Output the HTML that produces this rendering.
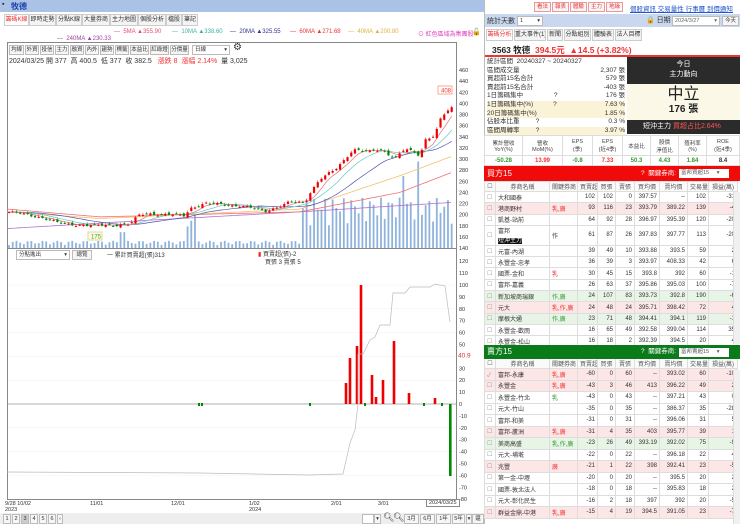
<!DOCTYPE html>
<html><head><meta charset="utf-8">
<style>
*{margin:0;padding:0;box-sizing:border-box}
body{width:740px;height:524px;overflow:hidden;background:#fff;font-family:"Liberation Sans","Noto Sans CJK TC",sans-serif;font-size:7px;color:#333;position:relative}
.a{position:absolute;white-space:nowrap}
.tab{position:absolute;top:14px;height:12px;border:1px solid #ccc;background:#f4f4f4;font-size:6px;line-height:10px;text-align:center;overflow:hidden;white-space:nowrap}
.btn{position:absolute;border:1px solid #bbb;background:#f6f6f6;font-size:5.5px;line-height:8px;height:10px;text-align:center;overflow:hidden;white-space:nowrap}
table{border-collapse:collapse;position:absolute;left:484px;font-size:6px;table-layout:fixed}
td{border:1px solid #ddd;padding:0 2px;overflow:hidden;white-space:nowrap;text-align:right}
td.l{text-align:left}
.pk td{background:#fde6e6}.gn td{background:#e8f5e6}
.r{color:#e33}.g{color:#393}
</style></head><body>
<div class="a" style="left:0;top:0;width:484px;height:12px;background:#a9c2e6"></div>
<div class="a" style="left:2px;top:1px;font-size:7px;color:#223">▪</div>
<div class="a" style="left:11px;top:1px;font-size:8px;color:#1a3fa8;font-weight:bold">牧德</div>
<div class="tab" style="left:4px;width:25px;color:#e33;background:#fff">籌碼K線</div>
<div class="tab" style="left:29px;width:27px">即時走勢</div>
<div class="tab" style="left:56px;width:26px">分點K線</div>
<div class="tab" style="left:82px;width:28px">大量券商</div>
<div class="tab" style="left:110px;width:28px">主力地圖</div>
<div class="tab" style="left:138px;width:28px">個股分析</div>
<div class="tab" style="left:166px;width:16px">檔股</div>
<div class="tab" style="left:182px;width:16px">筆記</div>
<div class="a" style="top:29px;left:114px;font-size:6px;color:#e05070">— &nbsp;5MA ▲355.90</div>
<div class="a" style="top:29px;left:172px;font-size:6px;color:#40b0a0">— &nbsp;10MA ▲338.60</div>
<div class="a" style="top:29px;left:230px;font-size:6px;color:#303090">— &nbsp;20MA ▲325.55</div>
<div class="a" style="top:29px;left:290px;font-size:6px;color:#e33">— &nbsp;60MA ▲271.68</div>
<div class="a" style="top:29px;left:348px;font-size:6px;color:#e0b040">— &nbsp;40MA ▲200.80</div>
<div class="a" style="top:29px;left:418px;font-size:6px;color:#e040c0">⊙ 紅色區域為集團股</div>
<div class="a" style="top:28px;left:472px;font-size:7px;color:#000">🔓</div>
<div class="a" style="top:36px;left:57px;font-size:6px;color:#a040a0">— &nbsp;240MA ▲230.33</div>
<div class="a" style="left:7px;top:42px;width:450px;height:458px;border:1px solid #888"></div>
<div class="btn" style="left:9px;top:45px;width:15px">均線</div><div class="btn" style="left:25px;top:45px;width:14px">外資</div><div class="btn" style="left:40px;top:45px;width:14px">投信</div><div class="btn" style="left:55px;top:45px;width:14px">主力</div><div class="btn" style="left:70px;top:45px;width:14px">融資</div><div class="btn" style="left:85px;top:45px;width:14px">內外</div><div class="btn" style="left:100px;top:45px;width:14px">趨勢</div><div class="btn" style="left:115px;top:45px;width:14px">標籤</div><div class="btn" style="left:130px;top:45px;width:19px">本益比</div><div class="btn" style="left:150px;top:45px;width:19px">紅綠燈</div><div class="btn" style="left:170px;top:45px;width:19px">分價量</div>
<div class="btn" style="left:192px;top:45px;width:38px;background:#fff;text-align:left;padding-left:2px">日線 <span style="position:absolute;right:2px">▾</span></div>
<div class="a" style="left:233px;top:42px;font-size:10px">⚙</div>
<div class="a" style="left:9px;top:56px;font-size:7px;color:#333">2024/03/25 開 377 &nbsp;高 400.5 &nbsp;低 377 &nbsp;收 382.5 &nbsp; <span class="r">漲跌 8 &nbsp;漲幅 2.14%</span> &nbsp;量 3,025</div>
<svg id="ch" class="a" style="left:0;top:0" width="484" height="524"></svg>
<div class="btn" style="left:16px;top:250px;width:54px;background:#fff;text-align:left;padding-left:2px">分點進出 <span style="position:absolute;right:2px">▾</span></div>
<div class="btn" style="left:72px;top:250px;width:20px">總覽</div>
<div class="a" style="left:107px;top:250px;font-size:6px">一 累計買賣超(張)313</div>
<div class="a" style="left:258px;top:249px;font-size:6px"><span style="color:#e22">▮</span> 買賣超(張)-2</div>
<div class="a" style="left:265px;top:257px;font-size:6px">買張 3 賣張 5</div>
<div class="a" style="left:5px;top:501px;font-size:5.5px;line-height:6px">9/28 10/02<br>2023</div>
<div class="a" style="left:90px;top:501px;font-size:5.5px">11/01</div>
<div class="a" style="left:171px;top:501px;font-size:5.5px">12/01</div>
<div class="a" style="left:249px;top:501px;font-size:5.5px;line-height:6px">1/02<br>2024</div>
<div class="a" style="left:331px;top:501px;font-size:5.5px">2/01</div>
<div class="a" style="left:378px;top:501px;font-size:5.5px">3/01</div>
<div class="a" style="left:426px;top:499px;font-size:5.5px;border:1px solid #888;padding:0 2px;background:#fff">2024/03/25</div>
<div class="a" style="left:0;top:513px;width:484px;height:11px;background:#eee"></div>
<div class="btn" style="left:3px;top:514px;width:8px">1</div><div class="btn" style="left:12px;top:514px;width:8px">2</div><div class="btn" style="left:21px;top:514px;width:8px;background:#ccc">3</div><div class="btn" style="left:30px;top:514px;width:8px">4</div><div class="btn" style="left:39px;top:514px;width:8px">5</div><div class="btn" style="left:48px;top:514px;width:8px">6</div><div class="btn" style="left:57px;top:514px;width:6px">‹</div>
<div class="btn" style="left:362px;top:514px;width:12px;background:#fff"></div><div class="btn" style="left:374px;top:514px;width:7px">▾</div>
<div class="a" style="left:383px;top:512px;font-size:9px">🔍︎</div><div class="a" style="left:393px;top:512px;font-size:9px">🔍︎</div>
<div class="btn" style="left:404px;top:514px;width:15px">3月</div><div class="btn" style="left:420px;top:514px;width:15px">6月</div><div class="btn" style="left:436px;top:514px;width:15px">1年</div><div class="btn" style="left:452px;top:514px;width:13px">5年</div><div class="btn" style="left:466px;top:514px;width:6px">▾</div><div class="btn" style="left:472px;top:514px;width:12px">還</div>

<div class="a" style="left:484px;top:0;width:1px;height:524px;background:#bbb"></div>
<div class="btn" style="left:534px;top:2px;width:17px;color:#e33;border-color:#e99">看法</div>
<div class="btn" style="left:552px;top:2px;width:17px;color:#e33;border-color:#e99">報表</div>
<div class="btn" style="left:570px;top:2px;width:17px;color:#e33;border-color:#e99">體驗</div>
<div class="btn" style="left:588px;top:2px;width:17px;color:#e33;border-color:#e99">主力</div>
<div class="btn" style="left:606px;top:2px;width:17px;color:#e33;border-color:#e99">地緣</div>
<div class="a" style="left:630px;top:3px;font-size:6.5px;color:#2255cc;text-decoration:underline">個股資訊 交易量性 行事曆 到價通知</div>
<div class="a" style="left:485px;top:14px;width:255px;height:13px;background:#c9d8ee"></div>
<div class="a" style="left:487px;top:16px;font-size:7px">統計天數</div>
<div class="btn" style="left:517px;top:16px;width:26px;background:#fff;text-align:left;padding-left:2px">1<span style="position:absolute;right:2px">▾</span></div>
<div class="a" style="left:646px;top:15px;font-size:7px">🔒 日期</div>
<div class="btn" style="left:672px;top:16px;width:48px;background:#fff;color:#666;text-align:left;padding-left:2px">2024/3/27<span style="position:absolute;right:2px">▾</span></div>
<div class="btn" style="left:722px;top:16px;width:17px">今天</div>
<div class="tab" style="left:486px;top:29px;width:27px;color:#e33;background:#fff">籌碼分析</div>
<div class="tab" style="left:514px;top:29px;width:32px">重大事件(1)</div>
<div class="tab" style="left:547px;top:29px;width:16px">新聞</div>
<div class="tab" style="left:564px;top:29px;width:27px">分點組別</div>
<div class="tab" style="left:592px;top:29px;width:22px">體驗表</div>
<div class="tab" style="left:615px;top:29px;width:27px">法人目標</div>
<div class="a" style="left:492px;top:44px;font-size:8.5px;font-weight:bold;color:#222">3563 牧德 &nbsp;<span class="r">394.5元 &nbsp;▲14.5 (+3.82%)</span></div>
<div class="a" style="left:485px;top:55px;width:255px;height:1.5px;background:#e33"></div>
<div class="a" style="left:487px;top:58px;font-size:6.5px;line-height:8.6px;width:138px">
統計區間 &nbsp;20240327 ~ 20240327<br>
區間成交量<span style="float:right">2,307 張</span><br>
買超前15名合計<span style="float:right">579 張</span><br>
賣超前15名合計<span style="float:right">-403 張</span><br>
1日籌碼集中 &nbsp; &nbsp; &nbsp; &nbsp; &nbsp; &nbsp; &nbsp; &nbsp; ?<span style="float:right">176 張</span><br>
<span style="background:#fbf3d8;display:block">1日籌碼集中(%) &nbsp; &nbsp; &nbsp; &nbsp; &nbsp; ?<span style="float:right">7.63 %</span></span>
<span style="background:#fbf3d8;display:block">20日籌碼集中(%)<span style="float:right">1.85 %</span></span>
佔股本比重 &nbsp; &nbsp; &nbsp; &nbsp; ?<span style="float:right">0.3 %</span><br>
<span style="background:#fbf3d8;display:block">區間周轉率 &nbsp; &nbsp; &nbsp; &nbsp; ?<span style="float:right">3.97 %</span></span>
</div>
<div class="a" style="left:627px;top:57px;width:113px;height:27px;background:#2b2b2b;color:#fff;text-align:center;font-size:7px;line-height:10px;padding-top:3px">今日<br>主力動向</div>
<div class="a" style="left:627px;top:84px;width:113px;height:36px;background:#fbf8e8;text-align:center;color:#222">
<div style="font-size:16px;line-height:18px;margin-top:2px">中立</div><div style="font-size:10px;line-height:11px;font-weight:bold">176 張</div></div>
<div class="a" style="left:627px;top:120px;width:113px;height:14px;background:#2b2b2b;color:#fff;font-size:7px;line-height:14px;padding-left:16px">短沖主力 <span style="color:#f55">買超占比2.64%</span></div>
<table style="top:135px;width:256px;font-size:5.5px;text-align:center">
<tr style="height:20px;color:#444"><td style="text-align:center;width:38px">累計營收<br>YoY(%)</td><td style="text-align:center;width:40px">營收<br>MoM(%)</td><td style="text-align:center;width:30px">EPS<br>(季)</td><td style="text-align:center;width:30px">EPS<br>(近4季)</td><td style="text-align:center;width:28px">本益比</td><td style="text-align:center;width:28px">股價<br>淨值比</td><td style="text-align:center;width:28px">殖利率<br>(%)</td><td style="text-align:center">ROE<br>(近4季)</td></tr>
<tr style="height:10px;font-weight:bold;font-size:6px"><td class="g" style="text-align:center">-50.28</td><td class="r" style="text-align:center">13.99</td><td class="g" style="text-align:center">-0.8</td><td class="r" style="text-align:center">7.33</td><td class="g" style="text-align:center">50.3</td><td class="g" style="text-align:center">4.43</td><td class="g" style="text-align:center">1.84</td><td style="text-align:center">8.4</td></tr>
</table>
<div class="a" style="left:484px;top:166px;width:256px;height:15px;background:#f00a0a;color:#fff;font-size:8px;line-height:15px;padding-left:3px">買方15<span style="position:absolute;left:157px;font-size:6.5px">? &nbsp;關鍵券商:</span><span style="position:absolute;left:195px;top:3px;width:50px;height:9px;background:#fff;color:#555;font-size:5.5px;line-height:9px;padding-left:2px">富邦買超15 &nbsp; &nbsp; ▾</span></div>
<div id="buy"></div>
<div class="a" style="left:484px;top:345px;width:256px;height:14px;background:#0a7a1a;color:#fff;font-size:8px;line-height:14px;padding-left:3px;z-index:2">賣方15<span style="position:absolute;left:157px;font-size:6.5px">? &nbsp;關鍵券商:</span><span style="position:absolute;left:195px;top:3px;width:50px;height:9px;background:#fff;color:#555;font-size:5.5px;line-height:9px;padding-left:2px">富邦賣超15 &nbsp; &nbsp; ▾</span></div>
<div id="sell"></div>
<div class="a" style="left:733px;top:192px;width:7px;height:152px;background:#f0f0f0;border-left:1px solid #ddd"></div>
<div class="a" style="left:733px;top:370px;width:7px;height:154px;background:#f0f0f0;border-left:1px solid #ddd;z-index:3"></div>
<script>
const W=[11,54,28,20,18,19,25,28,21,29];
function render(top,arr,rh){
 let h='<table style="top:'+top+'px;width:249px"><tr style="height:10px;background:#fafafa;color:#555">';
 const hd=['☐','券商名稱','關鍵券商','買賣超','買張','賣張','買均價','賣均價','交易量','損益(萬)'];
 hd.forEach((t,i)=>h+='<td style="text-align:center;width:'+W[i]+'px">'+t+'</td>');
 h+='</tr>';
 arr.forEach(r=>{
  h+='<tr class="'+r.cls+'" style="height:'+(r.h||rh)+'px"><td class="l" style="color:#999">'+(r.chk||'☐')+'</td>';
  r.c.forEach((v,i)=>h+='<td'+(i<2?' class="l"':'')+'>'+v+'</td>');
  h+='</tr>';});
 return h+'</table>';}
const buy=[
['大和國泰','',102,102,0,397.57,'--',102,-31,''],
['港商野村','<span class="r">乳,廣</span>',93,116,23,393.79,389.22,139,-4,'pk'],
['凱基-站前','',64,92,28,396.97,395.39,120,-20,''],
['富邦<br><span style="background:#111;color:#fff">短沖主力</span>','作',61,87,26,397.83,397.77,113,-20,'',20],
['元富-內湖','',39,49,10,393.88,393.5,59,2,''],
['永豐金-忠孝','',36,39,3,393.97,408.33,42,6,''],
['國票-金和','<span class="r">乳</span>',30,45,15,393.8,392,60,-1,''],
['富邦-嘉義','',26,63,37,395.86,395.03,100,-7,''],
['新加坡商瑞銀','<span class="g">作,廣</span>',24,107,83,393.73,392.8,190,-6,'gn'],
['元大','<span class="r">乳,作,廣</span>',24,48,24,395.71,398.42,72,4,'pk'],
['摩根大通','<span class="g">作,廣</span>',23,71,48,394.41,394.1,119,-1,'gn'],
['永豐金-歡雨','',16,65,49,392.58,399.04,114,35,''],
['永豐金-松山','',16,18,2,392.39,394.5,20,4,'']];
const B=buy.map(r=>({c:r.slice(0,9),cls:r[9],h:r[10]||null}));
document.getElementById('buy').innerHTML=render(181,B,11.3);
const sell=[
['富邦-永康','<span class="r">乳,廣</span>',-60,0,60,'--',393.02,60,-10,'pk'],
['永豐金','<span class="r">乳,廣</span>',-43,3,46,413,396.22,49,2,'pk'],
['永豐金-竹北','<span class="g">乳</span>',-43,0,43,'--',397.21,43,0,''],
['元大-竹山','',-35,0,35,'--',386.37,35,-28,''],
['富邦-和美','',-31,0,31,'--',396.06,31,5,''],
['富邦-蘆洲','<span class="r">乳,廣</span>',-31,4,35,403,395.77,39,1,'pk'],
['美商高盛','<span class="g">乳,作,廣</span>',-23,26,49,393.19,392.02,75,-9,'gn'],
['元大-埔墘','',-22,0,22,'--',396.18,22,4,''],
['兆豐','<span class="r">廣</span>',-21,1,22,398,392.41,23,-5,'pk'],
['第一金-中壢','',-20,0,20,'--',395.5,20,2,''],
['國票-敦北法人','',-18,0,18,'--',395.83,18,2,''],
['元大-彰化民生','',-16,2,18,397,392,20,-5,''],
['群益金鼎-中港','<span class="r">乳,廣</span>',-15,4,19,394.5,391.05,23,-7,'pk']];
const S=sell.map(r=>({c:r.slice(0,9),cls:r[9],h:null}));S[0].chk='✓';
document.getElementById('sell').innerHTML='<div style="position:absolute;left:0;top:0;width:740px;height:524px;overflow:hidden;clip-path:inset(358px 0 0 0)">'+render(358,S,11.5)+'</div>';

const svg=document.getElementById('ch');let s='';
const py=p=>70+(460-p)*0.5563;
const sy=v=>404-v*1.19;
for(let p=140;p<=460;p+=20){s+=`<text x="459" y="${py(p)+2}" font-size="5.5" fill="#333">${p}</text>`;}
[120,110,100,90,80,70,60,50,30,20,10,0,-10,-20,-30,-40,-50,-60,-70,-80].forEach(v=>s+=`<text x="459" y="${sy(v)+2}" font-size="5.5" fill="#333">${v}</text>`);
s+=`<text x="458" y="${sy(40.9)+2}" font-size="6.5" fill="#c33">40.9</text>`;
[100,80,60,40,20,-20,-40,-60].forEach(v=>s+=`<line x1="8" x2="456" y1="${sy(v)}" y2="${sy(v)}" stroke="#f2f2f2" stroke-width=".5"/>`);
s+=`<line x1="8" x2="456" y1="248.5" y2="248.5" stroke="#888" stroke-width="1"/>`;
s+=`<line x1="8" x2="456" y1="404" y2="404" stroke="#999" stroke-width=".7"/>`;
const K=[[7,205],[40,196],[60,184],[95,180],[130,183],[140,200],[150,202],[185,198],[190,212],[205,220],[240,216],[265,206],[290,222],[305,222],[310,240],[320,264],[335,280],[345,300],[353,318],[370,312],[380,318],[395,302],[405,318],[420,306],[425,335],[435,344],[440,370],[446,384],[452,391]];
function itp(P,x){for(let i=0;i<P.length-1;i++){if(x<=P[i+1][0]){const t=(x-P[i][0])/(P[i+1][0]-P[i][0]);return P[i][1]+t*(P[i+1][1]-P[i][1]);}}return P[P.length-1][1];}
const N=120,C=[],X=[];
for(let i=0;i<N;i++){const x=9+i*3.72;X.push(x);C.push(itp(K,x)+Math.sin(i*1.7)*1.5+Math.sin(i*0.6)*1.5);}
for(let i=0;i<N;i++){let base=X[i]<300?4+Math.abs(Math.sin(i*2.3))*6:30+Math.abs(Math.sin(i*1.9))*40;if([48,49,50].includes(i))base=30+i%3*8;if(i==30||i==31)base=22;if(i==110)base=120;if(i==106)base=100;const h=base*0.72;s+=`<rect x="${X[i]-0.9}" y="${248-h}" width="1.8" height="${h}" fill="#8fb3dc"/>`;}
function pl(P,col,w){let d='';for(let x=7;x<=452;x+=4)d+=(d?'L':'M')+x+','+py(itp(P,x)).toFixed(1);s+=`<path d="${d}" fill="none" stroke="${col}" stroke-width="${w}"/>`;}
pl([[7,175],[150,190],[300,205],[452,222]],'#b070d0',.8);
pl([[7,210],[100,196],[300,205],[400,240],[452,276]],'#f07070',.8);
pl([[7,205],[100,193],[300,210],[350,240],[400,270],[452,305]],'#f0c070',.8);
function ma(n,col){let d='';for(let i=0;i<N;i++){let a=0;for(let j=0;j<n;j++)a+=C[Math.max(0,i-j)];a/=n;d+=(d?'L':'M')+X[i].toFixed(1)+','+py(a).toFixed(1);}s+=`<path d="${d}" fill="none" stroke="${col}" stroke-width=".7"/>`;}
ma(20,'#5050b0');ma(10,'#60c8c0');ma(5,'#e07080');
for(let i=0;i<N;i++){const c=C[i],o=(i?C[i-1]:c)+Math.sin(i*3.1)*2.5;const up=c>=o;const col=up?'#e00':'#080';const hi=Math.max(o,c)+1.5+Math.abs(Math.sin(i))*2,lo=Math.min(o,c)-1.5;
s+=`<line x1="${X[i]}" x2="${X[i]}" y1="${py(hi)}" y2="${py(lo)}" stroke="${col}" stroke-width=".5"/>`;
const t=py(Math.max(o,c)),b=py(Math.min(o,c));s+=`<rect x="${X[i]-1.1}" y="${t}" width="2.2" height="${Math.max(1,b-t)}" fill="${col}"/>`;}
s+=`<rect x="88" y="232" width="14" height="8" fill="#fff8e0" stroke="#dd9"/><text x="91" y="238.5" font-size="6" fill="#3a3">175</text>`;
s+=`<rect x="438" y="86" width="14" height="8" fill="#fff" stroke="#fa8"/><text x="441" y="92.5" font-size="6" fill="#e33">408</text>`;
[[346,383],[350,358],[357,346],[361,285],[372,375],[376,397],[383,380],[394,341],[409,393],[435,398]].forEach(a=>s+=`<rect x="${a[0]-1.3}" y="${a[1]}" width="2.6" height="${404-a[1]}" fill="#e00"/>`);
s+=`<rect x="449" y="404" width="2.6" height="72" fill="#080"/>`;
[199,202,310,365,424,442].forEach(x=>s+=`<rect x="${x-1}" y="403" width="2" height="3" fill="#080"/>`);
const G=[[7,472],[200,473],[310,475],[343,474],[350,443],[355,430],[358,404],[358,354],[363,354],[370,340],[375,337],[380,325],[390,325],[393,293],[405,293],[410,287],[430,287],[435,284],[445,286],[450,322]];
s+=`<path d="${'M'+G.map(p=>p.join(',')).join('L')}" fill="none" stroke="#bbb" stroke-width=".7"/>`;
svg.innerHTML=s;
</script>
</body></html>
